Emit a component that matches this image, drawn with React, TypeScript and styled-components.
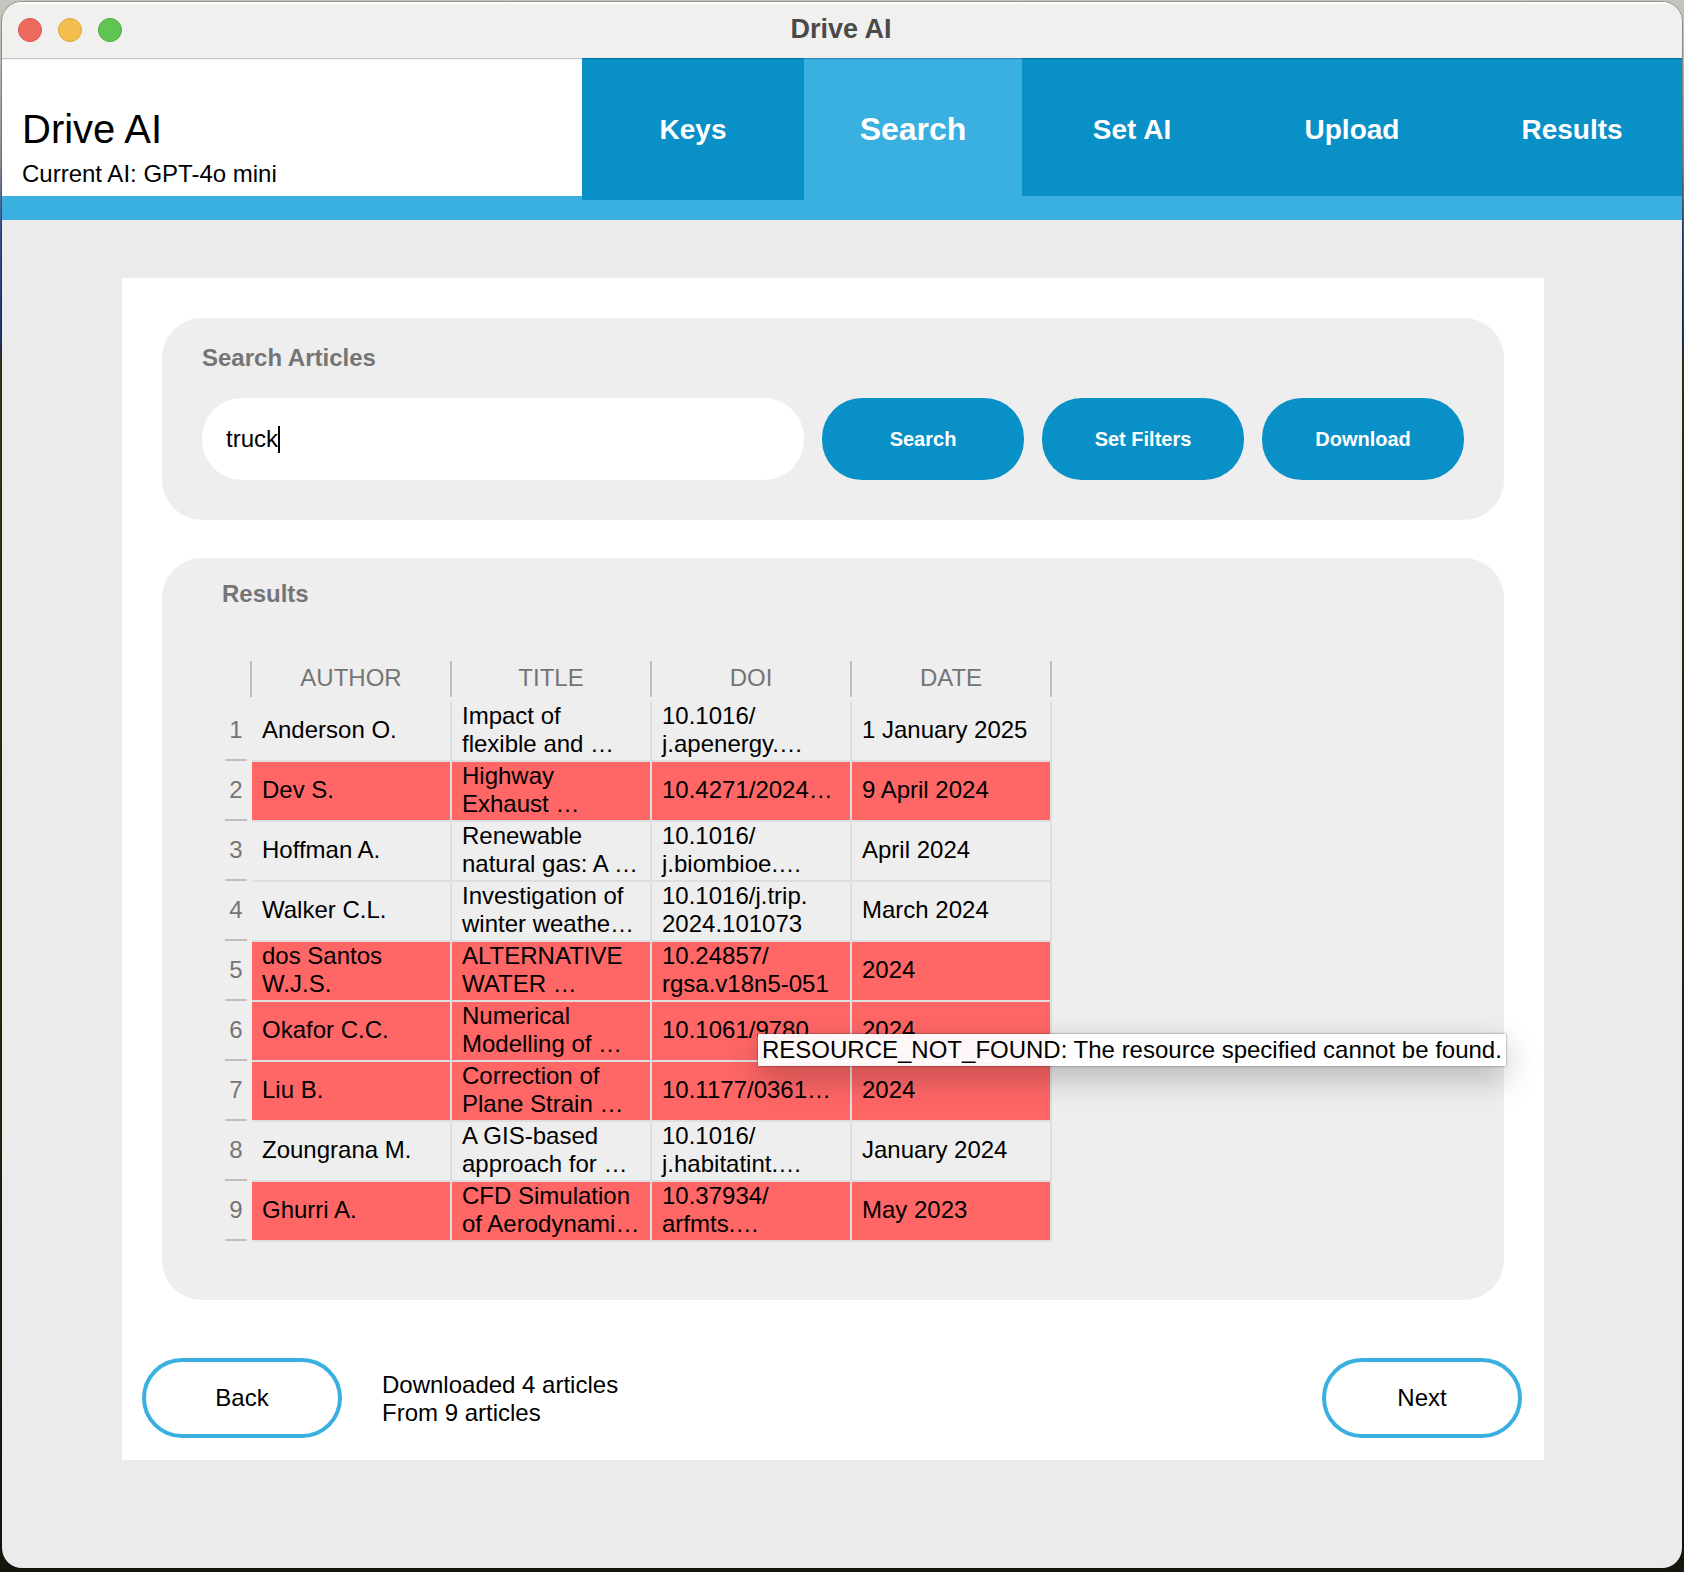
import React, { useLayoutEffect, useState } from "react";
import styled, { createGlobalStyle, css } from "styled-components";

const color = {
  primary: "#0990c7",
  accent: "#3ab0e1",
  window: "#ebebeb",
  panel: "#eeeeee",
  muted: "#757575",
  rule: "#bebebe",
  grid: "#dedede",
  failed: "#ff6666",
};

const fontStack = '"Liberation Sans", Arial, Helvetica, sans-serif';

const GlobalStyle = createGlobalStyle`
  *, *::before, *::after { box-sizing: border-box; }
  body {
    margin: 0;
    font: 24px/28px ${fontStack};
    color: #000;
  }
  button, input { font: inherit; color: inherit; }
`;

const Desktop = styled.div`
  display: flex;
  min-height: 100vh;
  padding: 2px 2px 4px;
  background: linear-gradient(#c6c5bd 0, #b9b6ab 60px, #8d8f92 160px, #34508c 230px, #1f3566 340px, #3a3018 360px, #2c2812 900px, #14170b 100%);
`;

const Window = styled.div`
  flex: 1;
  min-width: 0;
  display: flex;
  flex-direction: column;
  border-radius: 20px;
  overflow: hidden;
  background: ${color.window};
  box-shadow: 0 0 0 1px rgba(0, 0, 0, 0.25);
`;

const TitleBar = styled.div`
  position: relative;
  z-index: 2;
  display: grid;
  grid-template-columns: 1fr auto 1fr;
  align-items: center;
  height: 56px;
  padding: 0 18px 0 16px;
  background: #f0f0ee;
  box-shadow: inset 0 2px 1px #fff, 0 1px 0 rgba(0, 20, 60, 0.2), 0 2px 0 rgba(0, 20, 60, 0.05);
`;

const Lights = styled.div`
  display: flex;
  gap: 16px;
`;

const Light = styled.button<{ $fill: string; $edge: string }>`
  width: 24px;
  height: 24px;
  padding: 0;
  border: 1px solid ${(p) => p.$edge};
  border-radius: 50%;
  background: ${(p) => p.$fill};
`;

const WindowTitle = styled.div`
  padding-bottom: 2px;
  font-size: 27px;
  font-weight: 700;
  color: #4a4a4a;
`;

const Header = styled.header`
  display: flex;
  height: 162px;
  border-bottom: 24px solid ${color.accent};
  background: #fff;
`;

const Brand = styled.div`
  flex: 1;
  display: flex;
  flex-direction: column;
  justify-content: flex-end;
  gap: 9px;
  padding: 0 20px 8px;
`;

const AppName = styled.h1`
  margin: 0;
  font-size: 40px;
  line-height: 44px;
  font-weight: 400;
`;

const CurrentModel = styled.p`
  margin: 0;
`;

const Tabs = styled.nav`
  display: flex;
  width: 1100px;
`;

const Tab = styled.button<{ $active?: boolean; $raised?: boolean }>`
  flex: 0 0 220px;
  border: 0;
  padding: 6px 0 0;
  font-size: 28px;
  line-height: 36px;
  font-weight: 700;
  color: #fff;
  background: ${color.primary};
  ${(p) =>
    p.$active &&
    css`
      flex-basis: 218px;
      padding: 4px 0 0;
      font-size: 32px;
      background: ${color.accent};
    `}
  ${(p) =>
    p.$raised &&
    css`
      flex-basis: 222px;
      margin-bottom: -4px;
      padding: 2px 0 0;
    `}
`;

const Main = styled.main`
  flex: 1;
  padding: 58px 138px 108px 120px;
`;

const Page = styled.div`
  background: #fff;
`;

const Panels = styled.div`
  display: flex;
  flex-direction: column;
  gap: 38px;
  padding: 40px 40px 0;
`;

const SearchPanel = styled.form`
  display: flex;
  flex-direction: column;
  gap: 26px;
  padding: 26px 40px 40px;
  border-radius: 40px;
  background: ${color.panel};
`;

const FieldLabel = styled.label`
  font-weight: 700;
  color: ${color.muted};
`;

const SearchRow = styled.div`
  display: flex;
  gap: 18px;
  height: 82px;
`;

const Field = styled.div`
  position: relative;
  flex: 1;
  display: flex;
`;

const SearchInput = styled.input`
  flex: 1;
  min-width: 0;
  padding: 0 24px;
  border: 0;
  border-radius: 40px;
  outline: none;
  background: #fff;
  caret-color: transparent;
`;

const Caret = styled.span`
  position: absolute;
  top: 28px;
  width: 2px;
  height: 27px;
  background: #000;
  pointer-events: none;
`;

const ActionButton = styled.button`
  width: 202px;
  padding: 0;
  border: 0;
  border-radius: 40px;
  font-size: 20px;
  font-weight: 700;
  color: #fff;
  background: ${color.primary};
`;

const ResultsPanel = styled.section`
  padding: 22px 60px 58px;
  border-radius: 40px;
  background: ${color.panel};
`;

const PanelTitle = styled.h2`
  margin: 0 0 48px;
  font-size: 24px;
  line-height: 28px;
  font-weight: 700;
  color: ${color.muted};
`;

const Table = styled.table`
  width: 830px;
  table-layout: fixed;
  border-collapse: separate;
  border-spacing: 0;
`;

const IndexCol = styled.col`
  width: 30px;
`;

const ColumnHead = styled.th`
  height: 46px;
  padding: 0;
  font-weight: 400;
  color: ${color.muted};
`;

const CornerHead = styled.td`
  padding: 0;
`;

const HeadLabel = styled.span`
  display: block;
  height: 36px;
  padding-top: 3px;
  border-right: 2px solid ${color.rule};
`;

const RowHead = styled.th`
  height: 60px;
  padding: 0 5px 1px 3px;
  font-weight: 400;
  color: ${color.muted};
`;

const RowNumber = styled.span`
  display: block;
  height: 59px;
  padding-top: 14px;
  border-bottom: 2px solid ${color.rule};
`;

const Cell = styled.td<{ $failed: boolean }>`
  position: relative;
  height: 60px;
  padding: 0 0 2px 10px;
  border-right: 2px solid ${color.grid};
  border-bottom: 2px solid ${color.grid};
  background: ${(p) => (p.$failed ? color.failed : "transparent")} padding-box;
  white-space: pre;
`;

const Tooltip = styled.div`
  position: absolute;
  z-index: 3;
  top: 32px;
  left: 106px;
  padding: 2px 4px;
  background: rgba(255, 255, 255, 0.95);
  box-shadow: 0 0 2px rgba(0, 0, 0, 0.5), 0 12px 32px rgba(0, 0, 0, 0.25);
`;

const Footer = styled.footer`
  display: flex;
  align-items: center;
  gap: 40px;
  padding: 58px 22px 22px 20px;
`;

const StepButton = styled.button`
  width: 200px;
  height: 80px;
  border: 4px solid ${color.accent};
  border-radius: 40px;
  background: #fff;
`;

const Status = styled.p`
  flex: 1;
  margin: 0;
  padding-top: 2px;
  white-space: pre-line;
`;

type Article = {
  cells: [string, string, string, string];
  failed?: boolean;
  error?: string;
};

const articles: Article[] = [
  { cells: ["Anderson O.", "Impact of\nflexible and …", "10.1016/\nj.apenergy.…", "1 January 2025"] },
  { cells: ["Dev S.", "Highway\nExhaust …", "10.4271/2024…", "9 April 2024"], failed: true },
  { cells: ["Hoffman A.", "Renewable\nnatural gas: A …", "10.1016/\nj.biombioe.…", "April 2024"] },
  { cells: ["Walker C.L.", "Investigation of\nwinter weathe…", "10.1016/j.trip.\n2024.101073", "March 2024"] },
  { cells: ["dos Santos\nW.J.S.", "ALTERNATIVE\nWATER …", "10.24857/\nrgsa.v18n5-051", "2024"], failed: true },
  {
    cells: ["Okafor C.C.", "Numerical\nModelling of …", "10.1061/9780…", "2024"],
    failed: true,
    error: "RESOURCE_NOT_FOUND: The resource specified cannot be found.",
  },
  { cells: ["Liu B.", "Correction of\nPlane Strain …", "10.1177/0361…", "2024"], failed: true },
  { cells: ["Zoungrana M.", "A GIS-based\napproach for …", "10.1016/\nj.habitatint.…", "January 2024"] },
  { cells: ["Ghurri A.", "CFD Simulation\nof Aerodynami…", "10.37934/\narfmts.…", "May 2023"], failed: true },
];

const columns = ["AUTHOR", "TITLE", "DOI", "DATE"];
const DOI_COLUMN = 2;

function SearchField() {
  const [query, setQuery] = useState("truck");
  const [textWidth, setTextWidth] = useState(0);

  useLayoutEffect(() => {
    const ctx = document.createElement("canvas").getContext("2d");
    if (!ctx) return;
    ctx.font = `24px ${fontStack}`;
    setTextWidth(Math.round(ctx.measureText(query).width));
  }, [query]);

  return (
    <Field>
      <SearchInput id="query" type="text" value={query} onChange={(e) => setQuery(e.target.value)} />
      <Caret style={{ left: 24 + textWidth }} />
    </Field>
  );
}

export default function App() {
  return (
    <>
      <GlobalStyle />
      <Desktop>
        <Window>
          <TitleBar>
            <Lights>
              <Light aria-label="Close" $fill="#ed6a5f" $edge="#d9564c" />
              <Light aria-label="Minimize" $fill="#f5bf4f" $edge="#dca63c" />
              <Light aria-label="Zoom" $fill="#61c554" $edge="#4dab40" />
            </Lights>
            <WindowTitle>Drive AI</WindowTitle>
          </TitleBar>
          <Header>
            <Brand>
              <AppName>Drive AI</AppName>
              <CurrentModel>Current AI: GPT-4o mini</CurrentModel>
            </Brand>
            <Tabs>
              <Tab type="button" $raised>Keys</Tab>
              <Tab type="button" $active>Search</Tab>
              <Tab type="button">Set AI</Tab>
              <Tab type="button">Upload</Tab>
              <Tab type="button">Results</Tab>
            </Tabs>
          </Header>
          <Main>
            <Page>
              <Panels>
                <SearchPanel onSubmit={(e) => e.preventDefault()}>
                  <FieldLabel htmlFor="query">Search Articles</FieldLabel>
                  <SearchRow>
                    <SearchField />
                    <ActionButton type="submit">Search</ActionButton>
                    <ActionButton type="button">Set Filters</ActionButton>
                    <ActionButton type="button">Download</ActionButton>
                  </SearchRow>
                </SearchPanel>
                <ResultsPanel>
                  <PanelTitle>Results</PanelTitle>
                  <Table>
                    <colgroup>
                      <IndexCol />
                      <col span={4} />
                    </colgroup>
                    <thead>
                      <tr>
                        <CornerHead>
                          <HeadLabel />
                        </CornerHead>
                        {columns.map((name) => (
                          <ColumnHead key={name} scope="col">
                            <HeadLabel>{name}</HeadLabel>
                          </ColumnHead>
                        ))}
                      </tr>
                    </thead>
                    <tbody>
                      {articles.map((article, i) => (
                        <tr key={i}>
                          <RowHead scope="row">
                            <RowNumber>{i + 1}</RowNumber>
                          </RowHead>
                          {article.cells.map((text, c) => (
                            <Cell key={c} $failed={!!article.failed}>
                              {text}
                              {c === DOI_COLUMN && article.error && (
                                <Tooltip role="tooltip">{article.error}</Tooltip>
                              )}
                            </Cell>
                          ))}
                        </tr>
                      ))}
                    </tbody>
                  </Table>
                </ResultsPanel>
              </Panels>
              <Footer>
                <StepButton type="button">Back</StepButton>
                <Status>{"Downloaded 4 articles\nFrom 9 articles"}</Status>
                <StepButton type="button">Next</StepButton>
              </Footer>
            </Page>
          </Main>
        </Window>
      </Desktop>
    </>
  );
}
